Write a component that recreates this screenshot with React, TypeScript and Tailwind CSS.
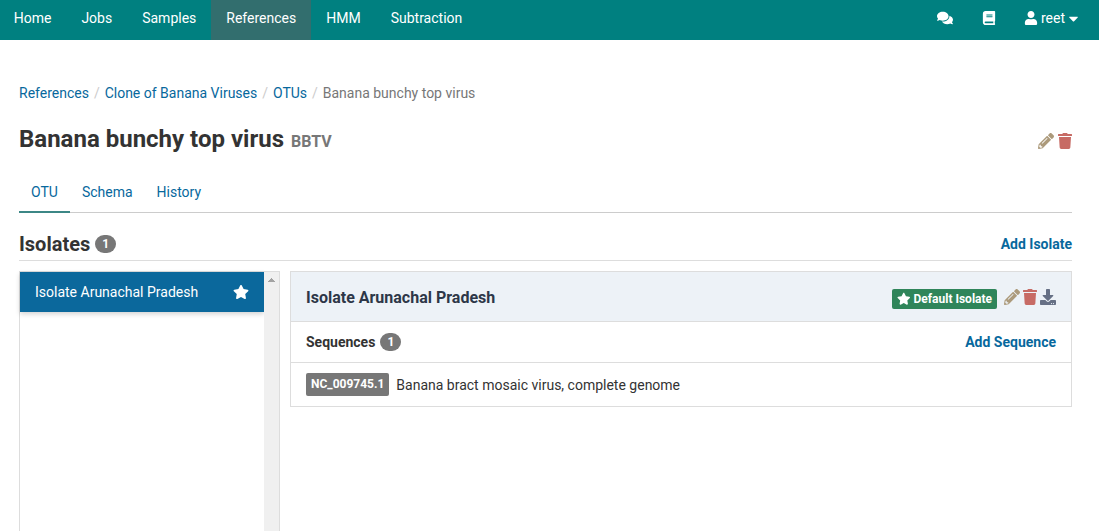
import React from "react";
import {
  FaBook,
  FaCaretDown,
  FaComments,
  FaDownload,
  FaPencilAlt,
  FaStar,
  FaTrash,
  FaUser,
} from "react-icons/fa";

const navItems = ["Home", "Jobs", "Samples", "References", "HMM", "Subtraction"];

function NavBar() {
  return (
    <nav className="flex h-10 items-stretch justify-between bg-[#008080] pr-[18px] text-white">
      <div className="flex pl-px">
        {navItems.map((item) => (
          <a
            key={item}
            className={
              item === "References"
                ? "bg-[#326e6e] px-[15px] pt-2"
                : "px-[15px] pt-2 first:pl-[12.7px]"
            }
          >
            {item}
          </a>
        ))}
      </div>
      <div className="flex h-9 items-center">
        <FaComments className="mr-[28px] size-4" />
        <FaBook className="mr-[27px] size-4 py-px" />
        <FaUser className="mr-[3px] size-[14px]" />
        <span>reet</span>
        <FaCaretDown className="ml-px size-[15px]" />
      </div>
    </nav>
  );
}

function Badge({ children }: { children: React.ReactNode }) {
  return (
    <span className="flex h-[18px] w-[21px] items-center justify-center rounded-full bg-[#777] text-xs font-bold text-white">
      {children}
    </span>
  );
}

function Breadcrumb() {
  const links = ["References", "Clone of Banana Viruses", "OTUs"];
  return (
    <div className="flex h-5 text-[#07689d]">
      {links.map((link) => (
        <React.Fragment key={link}>
          <a>{link}</a>
          <span className="w-[15.7px] text-center text-[#ccc]">/</span>
        </React.Fragment>
      ))}
      <span className="text-[#777]">Banana bunchy top virus</span>
    </div>
  );
}

function IsolateList() {
  return (
    <div className="flex h-[300px] w-[261px] shrink-0 border border-[#ddd]">
      <div className="flex-1">
        <div className="flex h-10 items-center justify-between bg-[#0b689c] px-[15px] text-white shadow-[0_2px_5px_rgba(0,0,0,0.18)]">
          <span>Isolate Arunachal Pradesh</span>
          <FaStar className="size-4" />
        </div>
      </div>
      <div className="w-[15px] bg-[#f0f0f0] pt-[6px] pl-[4px]">
        <svg className="block h-1 w-[7px]" viewBox="0 0 7 4" shapeRendering="crispEdges">
          <path d="M3 0h1v1h1v1h1v1h1v1H0V3h1V2h1V1h1z" fill="#a3a3a3" />
        </svg>
      </div>
    </div>
  );
}

function IsolateDetail() {
  return (
    <div className="flex-1 self-start border border-[#ddd]">
      <div className="flex h-[50px] items-center justify-between border-b border-[#ddd] bg-[#edf2f7] px-[15px]">
        <h3 className="pt-[2px] text-base font-bold text-[#2d3748]">Isolate Arunachal Pradesh</h3>
        <div className="flex items-center">
          <span className="mt-1 mr-[7px] flex h-5 w-[105px] items-center rounded-xs bg-[#2f855a] px-[5px] text-xs font-bold whitespace-nowrap text-white">
            <FaStar className="mr-[3px] size-[13.5px] shrink-0" />
            Default Isolate
          </span>
          <FaPencilAlt className="mr-[3px] size-4 text-[#ac9a7b]" />
          <FaTrash className="mr-[3px] h-4 w-[14px] text-[#c76b65]" />
          <FaDownload className="size-4 text-[#667085]" />
        </div>
      </div>
      <div className="flex h-[41px] items-center justify-between border-b border-[#ddd] px-[15px]">
        <div className="flex items-center gap-[5px] font-bold">
          <span>Sequences</span>
          <Badge>1</Badge>
        </div>
        <a className="font-bold text-[#07689d]">Add Sequence</a>
      </div>
      <div className="flex h-[43px] items-center px-[15px]">
        <span className="mr-[7px] flex h-[23px] items-center rounded-xs bg-[#777] px-[5px] pb-px text-xs font-bold text-white">
          NC_009745.1
        </span>
        <span className="pt-px">Banana bract mosaic virus, complete genome</span>
      </div>
    </div>
  );
}

export default function App() {
  return (
    <div className="h-[531px] overflow-hidden bg-white font-['Roboto',sans-serif] text-sm leading-5 text-[#333]">
      <NavBar />
      <main className="mr-[27px] ml-[19px] pt-[43px]">
        <Breadcrumb />
        <header className="mt-[18px] flex h-9 items-center justify-between">
          <h1 className="flex items-baseline gap-[7px] text-2xl font-bold">
            Banana bunchy top virus
            <small className="text-base font-bold text-[#777]">BBTV</small>
          </h1>
          <div className="flex items-center pt-1">
            <FaPencilAlt className="mr-[4px] size-4 text-[#ac9a7b]" />
            <FaTrash className="h-4 w-[14px] text-[#c76b65]" />
          </div>
        </header>
        <div className="mt-[15px] flex h-[41px] border-b border-[#ccc] text-[#07689d]">
          <a className="h-[41px] border-b-2 border-[#3c8786] px-3 pt-[10px]">OTU</a>
          <a className="px-3 pt-[10px]">Schema</a>
          <a className="px-3 pt-[10px]">History</a>
        </div>
        <div className="mt-[15px] flex h-[33px] items-center justify-between border-b border-[#ddd]">
          <h2 className="flex items-center gap-[5px] text-xl font-bold">
            Isolates
            <Badge>1</Badge>
          </h2>
          <a className="font-bold text-[#07689d]">Add Isolate</a>
        </div>
        <div className="mt-[10px] flex gap-[10px]">
          <IsolateList />
          <IsolateDetail />
        </div>
      </main>
    </div>
  );
}
